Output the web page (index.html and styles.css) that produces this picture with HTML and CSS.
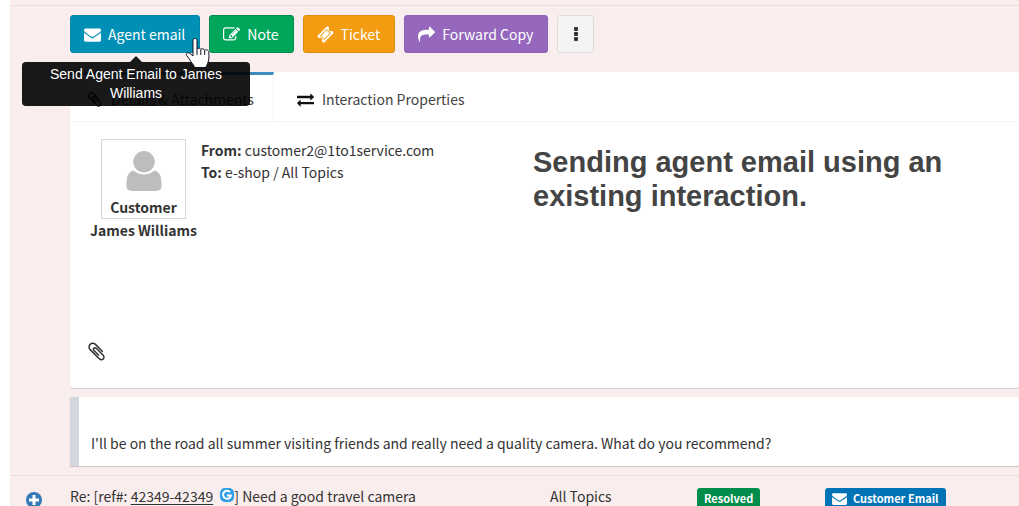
FILE: index.html
```html
<!DOCTYPE html>
<html lang="en">
<head>
    <meta charset="UTF-8">
    <meta name="viewport" content="width=device-width, initial-scale=1.0">
    <title>Interaction</title>
    <link rel="stylesheet" href="styles.css">
</head>
<body>
    <!-- shared icons -->
    <svg class="icon-defs" aria-hidden="true">
        <symbol id="envelope" viewBox="0 0 1792 1792"><path d="M1792 710v794q0 66-47 113t-113 47h-1472q-66 0-113-47t-47-113v-794q44 49 101 87 362 246 497 345 57 42 92.5 65.5t94.5 48 110 24.5h2q51 0 110-24.5t94.5-48 92.5-65.5q170-123 498-345 57-39 100-87zm0-294q0 79-49 151t-122 123q-376 261-468 325-10 7-42.5 31t-54 38.5-52 32.5-57.5 27-50 9h-2q-23 0-50-9t-57.5-27-52-32.5-54-38.5-42.5-31q-91-64-262-182.5t-205-142.5q-62-42-117-115.5t-55-136.5q0-78 41.5-130t118.5-52h1472q65 0 112.5 47t47.5 113z"/></symbol>
        <symbol id="paperclip" viewBox="0 0 1792 1792"><path d="M1596 1385q0 117-79 196t-196 79q-135 0-235-100l-777-776q-113-115-113-271 0-159 110-270t269-111q158 0 273 113l605 606q10 10 10 22 0 16-30.5 46.5t-46.5 30.5q-13 0-23-10l-606-607q-79-77-181-77-106 0-179 75t-73 181q0 105 76 181l776 777q63 63 145 63 64 0 106-42t42-106q0-82-63-145l-581-581q-26-24-60-24-29 0-48 19t-19 48q0 32 25 59l410 410q10 10 10 22 0 16-31 47t-47 31q-12 0-22-10l-410-410q-63-61-63-149 0-82 57-139t139-57q88 0 149 63l581 581q100 98 100 235z"/></symbol>
    </svg>

    <main class="timeline">
        <section class="interaction">
            <div class="toolbar">
                <div class="tooltip-wrap">
                    <button type="button" class="btn btn-email" aria-describedby="emailTip">
                        <svg class="icon"><use href="#envelope"/></svg>Agent email
                    </button>
                    <div class="tooltip" role="tooltip" id="emailTip">Send Agent Email to James Williams</div>
                    <svg class="pointer" viewBox="0 0 26 32" aria-hidden="true">
                        <path d="M8 3.5C8 .8 12 .8 12 3.5V12c.7-1.5 3.6-1.2 3.8.6.8-1.3 3.5-1 3.8.8.8-1 3.9-.8 4.2 1.8.2 4 .5 8-1.3 11.5-.8 1.8-1.3 2.5-1.6 3.8H9.4c-.4-2.4-1.5-3.2-3-5.2-1.6-2.2-2.8-4.8-4.7-6.8-1.2-1.8 1.2-3.7 3.2-2.2L8 19z"/>
                        <path d="M12 12v6M15.8 13v5M19.7 13.8V18"/>
                    </svg>
                </div>
                <button type="button" class="btn btn-note">
                    <svg class="icon" viewBox="0 0 1792 1792"><path d="M888 1184l116-116-152-152-116 116v56h96v96h56zm440-720q-16-16-33 1l-350 350q-17 17-1 33t33-1l350-350q17-17 1-33zm80 594v190q0 119-84.5 203.5t-203.5 84.5h-832q-119 0-203.5-84.5t-84.5-203.5v-832q0-119 84.5-203.5t203.5-84.5h832q63 0 117 25 15 7 18 23 3 17-9 29l-49 49q-14 14-32 8-23-6-45-6h-832q-66 0-113 47t-47 113v832q0 66 47 113t113 47h832q66 0 113-47t47-113v-126q0-13 9-22l64-64q15-15 35-7t20 29zm-96-738l288 288-672 672h-288v-288zm444 132l-92 92-288-288 92-92q28-28 68-28t68 28l152 152q28 28 28 68t-28 68z"/></svg>Note
                </button>
                <button type="button" class="btn btn-ticket">
                    <svg class="icon" viewBox="0 0 1792 1792"><path d="M1024 452l316 316-572 572-316-316zm-211 979l618-618q19-19 19-45t-19-45l-362-362q-18-18-45-18t-45 18l-618 618q-19 19-19 45t19 45l362 362q18 18 45 18t45-18zm889-637l-907 908q-37 37-90.5 37t-90.5-37l-126-126q56-56 56-136t-56-136-136-56-136 56l-125-126q-37-37-37-90.5t37-90.5l907-906q37-37 90.5-37t90.5 37l125 125q-56 56-56 136t56 136 136 56 136-56l126 125q37 37 37 90.5t-37 90.5z"/></svg>Ticket
                </button>
                <button type="button" class="btn btn-forward">
                    <svg class="icon" viewBox="0 0 1792 1792"><path d="M1792 640q0 26-19 45l-512 512q-19 19-45 19t-45-19-19-45v-256h-224q-98 0-175.5 6t-154 21.5-133 42.5-105.5 69.5-80 101-48.5 138.5-17.5 181q0 55 5 123 0 6 2.5 23.5t2.5 26.5q0 15-8.5 25t-23.5 10q-16 0-28-17-7-9-13-22t-13.5-30-10.5-24q-127-285-127-451 0-199 53-333 162-403 875-403h224v-256q0-26 19-45t45-19 45 19l512 512q19 19 19 45z"/></svg>Forward Copy
                </button>
                <button type="button" class="btn btn-more" aria-label="More actions">
                    <svg class="dots" viewBox="0 0 4 14"><rect width="4" height="4" rx="1"/><rect y="5" width="4" height="4" rx="1"/><rect y="10" width="4" height="4" rx="1"/></svg>
                </button>
            </div>

            <div class="panel">
                <nav class="tabs">
                    <a href="#details" class="tab active"><svg class="icon"><use href="#paperclip"/></svg>Details &amp; Attachments</a>
                    <a href="#properties" class="tab"><svg class="icon" viewBox="0 0 1792 1792"><path d="M1792 1184v192q0 13-9.5 22.5t-22.5 9.5h-1376v192q0 13-9.5 22.5t-22.5 9.5q-12 0-24-10l-319-320q-9-9-9-22 0-14 9-23l320-320q9-9 23-9 13 0 22.5 9.5t9.5 22.5v192h1376q13 0 22.5 9.5t9.5 22.5zm0-544q0 14-9 23l-320 320q-9 9-23 9-13 0-22.5-9.5t-9.5-22.5v-192h-1376q-13 0-22.5-9.5t-9.5-22.5v-192q0-13 9.5-22.5t22.5-9.5h1376v-192q0-14 9-23t23-9q12 0 24 10l319 319q9 9 9 23z"/></svg>Interaction Properties</a>
                </nav>
                <div class="details" id="details">
                    <div class="contact">
                        <div class="avatar">
                            <svg viewBox="0 0 36 41" aria-hidden="true"><circle cx="18" cy="11" r="11"/><path d="M7 20q11 8 22 0 7 2 7 13v3q0 5-6 5H6q-6 0-6-5v-3Q0 22 7 20z"/></svg>
                            <span>Customer</span>
                        </div>
                        <div class="contact-name">James Williams</div>
                    </div>
                    <div class="addresses">
                        <div><b>From:</b> customer2@1to1service.com</div>
                        <div><b>To:</b> e-shop / All Topics</div>
                    </div>
                    <h1>Sending agent email using an existing interaction.</h1>
                </div>
                <div class="attachments">
                    <svg class="clip" aria-hidden="true"><use href="#paperclip"/></svg>
                </div>
            </div>

            <div class="message">I'll be on the road all summer visiting friends and really need a quality camera. What do you recommend?</div>
        </section>

        <section class="row">
            <button type="button" class="expand" aria-label="Expand">
                <svg viewBox="0 0 16 16"><circle cx="8" cy="8" r="8"/><path d="M8 3v10M3 8h10"/></svg>
            </button>
            <div class="subject">Re: [ref#: <a href="#ref">42349-42349</a> <svg class="ref-logo" viewBox="0 0 14 14" aria-hidden="true"><rect width="14" height="14" rx="5"/><path d="M10 4A4 4 0 1 0 11 7.5H7"/></svg>] Need a good travel camera</div>
            <div class="topic">All Topics</div>
            <div class="status"><span class="badge badge-resolved">Resolved</span></div>
            <div class="type"><span class="badge badge-email"><svg class="badge-icon"><use href="#envelope"/></svg>Customer Email</span></div>
        </section>
    </main>
</body>
</html>
```
FILE: styles.css
```css
* {
    box-sizing: border-box;
}

html {
    overflow: hidden;
}

body {
    margin: 0;
    background-color: #ffffff;
    color: #333333;
    font-family: "Source Sans Pro", "Noto Sans CJK SC", sans-serif;
    font-size: 14px;
    line-height: 22px;
}

.icon-defs {
    display: none;
}

.timeline {
    margin-left: 10px;
    padding-top: 5px;
    background-color: #f9eeed;
}

.interaction {
    padding: 9px 0 9px 60px;
    border-top: 1px solid #f2dbd5;
}

/* Toolbar */
.toolbar {
    display: flex;
    gap: 9px;
    margin-bottom: 19px;
}

.btn {
    display: flex;
    align-items: center;
    gap: 7px;
    height: 38px;
    padding: 0 14px 0 13px;
    border: 1px solid;
    border-radius: 3px;
    color: #ffffff;
    font-family: inherit;
    font-size: 14px;
    line-height: 22px;
    white-space: nowrap;
    cursor: pointer;
}

.icon {
    width: 17px;
    height: 17px;
    flex: none;
    fill: currentColor;
}

.btn-email {
    background-color: #008fb5;
    border-color: #0086a8;
}

.btn-note {
    background-color: #00a65a;
    border-color: #008d4c;
}

.btn-ticket {
    background-color: #f39c12;
    border-color: #e08e0b;
}

.btn-forward {
    background-color: #9567bd;
    border-color: #9060b8;
}

.btn-more {
    width: 37px;
    padding: 0;
    justify-content: center;
    background-color: #f4f4f4;
    border-color: #dddddd;
    color: #333333;
}

.dots {
    width: 4px;
    height: 14px;
    fill: currentColor;
}

.tooltip-wrap {
    position: relative;
}

.tooltip {
    position: absolute;
    z-index: 2;
    top: 47px;
    left: -48px;
    width: 228px;
    padding: 3px 16px;
    border-radius: 4px;
    background-color: rgba(0, 0, 0, 0.9);
    color: #ffffff;
    font-family: "Liberation Sans", Arial, sans-serif;
    font-size: 14px;
    line-height: 19px;
    text-align: center;
}

.tooltip::before {
    content: "";
    position: absolute;
    top: -6px;
    left: 108px;
    border: 6px solid transparent;
    border-top: 0;
    border-bottom-color: rgba(0, 0, 0, 0.9);
}

.pointer {
    position: absolute;
    z-index: 3;
    top: 22px;
    left: 115px;
    width: 26px;
    height: 32px;
    fill: #ffffff;
    stroke: #111122;
}

/* Details panel */
.panel {
    margin-bottom: 9px;
    border-radius: 3px;
    background-color: #ffffff;
    box-shadow: 0 1px 1px rgba(0, 0, 0, 0.15);
}

.tabs {
    display: flex;
    border-bottom: 1px solid #f4f4f4;
}

.tab {
    display: flex;
    align-items: center;
    gap: 8px;
    height: 49px;
    padding: 5px 18px 0 23px;
    color: #444444;
    text-decoration: none;
}

.tab .icon {
    color: #111111;
}

.tab.active {
    padding: 2px 19px 0 16px;
    border-top: 3px solid #3c8dbc;
    border-right: 1px solid #f4f4f4;
}

.details {
    display: flex;
    padding: 17px 16px 0 19px;
}

.contact {
    width: 109px;
    text-align: center;
    font-weight: bold;
}

.avatar {
    display: flex;
    flex-direction: column;
    align-items: center;
    gap: 5px;
    width: 85px;
    height: 80px;
    margin: 0 auto;
    padding-top: 11px;
    border: 1px solid #d2d6de;
}

.avatar svg {
    width: 36px;
    height: 41px;
    fill: #bdbdbd;
}

.contact-name {
    white-space: nowrap;
}

.addresses {
    width: 335px;
    padding-left: 3px;
}

h1 {
    flex: 1;
    max-width: 440px;
    margin: 6px 0 0;
    color: #444444;
    font-family: "Liberation Sans", Arial, sans-serif;
    font-size: 29px;
    line-height: 34px;
}

.attachments {
    padding: 100px 16px 26px;
}

.clip {
    display: block;
    width: 21px;
    height: 21px;
    fill: #333333;
}

.message {
    padding: 35px 12px 12px;
    border-left: 9px solid #d2d6de;
    background-color: #ffffff;
    box-shadow: 0 1px 1px rgba(0, 0, 0, 0.15);
}

/* Collapsed interaction */
.row {
    display: grid;
    grid-template-columns: 60px 480px 147px 128px 1fr;
    padding: 9px 0;
    border-top: 1px solid #f2dbd5;
}

.expand {
    justify-self: start;
    margin: 7px 0 0 16px;
    padding: 0;
    border: 0;
    background: none;
    height: 16px;
    cursor: pointer;
}

.expand svg {
    display: block;
    width: 16px;
    height: 16px;
    fill: #337ab7;
    stroke: #ffffff;
    stroke-width: 3;
}

.expand circle {
    stroke: none;
}

.subject a {
    color: #333333;
    text-underline-offset: 2px;
}

.ref-logo {
    width: 14px;
    height: 14px;
    margin: 0 0 0 4px;
    fill: #2d9fe6;
}

.ref-logo path {
    fill: none;
    stroke: #ffffff;
    stroke-width: 2;
}

.status,
.type {
    display: flex;
    padding-top: 3px;
}

.badge {
    display: flex;
    align-items: center;
    gap: 6px;
    height: 20px;
    padding: 0 7px;
    border-radius: 3px;
    color: #ffffff;
    font-size: 11px;
    font-weight: bold;
}

.badge-resolved {
    background-color: #008d4c;
}

.badge-email {
    background-color: #0073b7;
}

.badge-icon {
    width: 15px;
    height: 15px;
    fill: currentColor;
}
```
